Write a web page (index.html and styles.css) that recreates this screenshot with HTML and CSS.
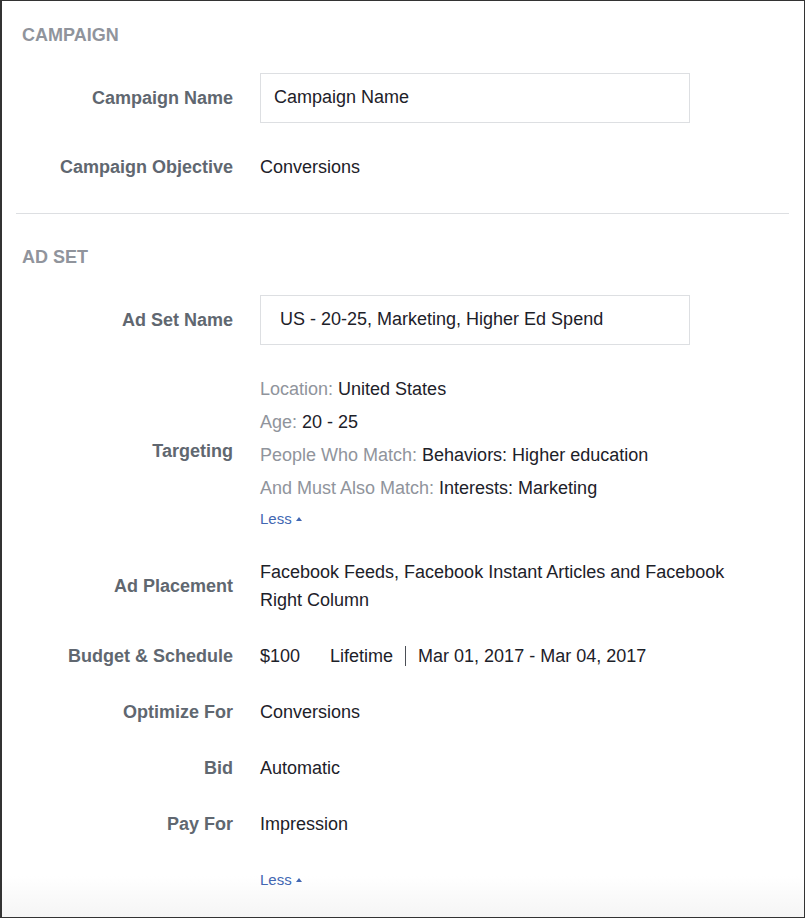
FILE: index.html
```html
<!DOCTYPE html>
<html>
<head>
  <meta charset="UTF-8">
  <title>Campaign Review</title>
  <link rel="stylesheet" href="styles.css">
</head>
<body>
  <div class="frame">
    <!-- Campaign -->
    <div class="section section-first">
      <h2 class="section-title">CAMPAIGN</h2>
      <div class="row row-input">
        <div class="label">Campaign Name</div>
        <div class="value"><div class="field">Campaign Name</div></div>
      </div>
      <div class="row">
        <div class="label">Campaign Objective</div>
        <div class="value">Conversions</div>
      </div>
    </div>

    <!-- Ad set -->
    <div class="section">
      <h2 class="section-title">AD SET</h2>
      <div class="row row-input">
        <div class="label">Ad Set Name</div>
        <div class="value"><div class="field field-wide">US - 20-25, Marketing, Higher Ed Spend</div></div>
      </div>
      <div class="row row-targeting">
        <div class="label">Targeting</div>
        <div class="value">
          <div class="target-line"><span class="muted">Location:</span> United States</div>
          <div class="target-line"><span class="muted">Age:</span> 20 - 25</div>
          <div class="target-line"><span class="muted">People Who Match:</span> Behaviors: Higher education</div>
          <div class="target-line"><span class="muted">And Must Also Match:</span> Interests: Marketing</div>
          <a class="less" href="#">Less<span class="caret"></span></a>
        </div>
      </div>
      <div class="row row-placement">
        <div class="label">Ad Placement</div>
        <div class="value">Facebook Feeds, Facebook Instant Articles and Facebook Right Column</div>
      </div>
      <div class="row">
        <div class="label">Budget &amp; Schedule</div>
        <div class="value budget">
          <span class="amount">$100</span>
          <span class="period">Lifetime</span>
          <span class="dates">Mar 01, 2017 - Mar 04, 2017</span>
        </div>
      </div>
      <div class="row">
        <div class="label">Optimize For</div>
        <div class="value">Conversions</div>
      </div>
      <div class="row">
        <div class="label">Bid</div>
        <div class="value">Automatic</div>
      </div>
      <div class="row">
        <div class="label">Pay For</div>
        <div class="value">Impression</div>
      </div>
      <div class="footer-row">
        <a class="less" href="#">Less<span class="caret"></span></a>
      </div>
    </div>
  </div>
</body>
</html>
```

FILE: styles.css
```css
html, body {
  margin: 0;
  padding: 0;
}
body {
  font-family: "Liberation Sans", Arial, Helvetica, sans-serif;
  font-size: 18px;
  line-height: 22px;
  color: #1d2129;
  background: #fff;
}
.frame {
  box-sizing: border-box;
  width: 805px;
  height: 918px;
  border: 1px solid #333;
  border-left-width: 2px;
  padding: 0 15px 0 14px;
  background: linear-gradient(to bottom, #fff 0, #fff 875px, #f5f5f5 100%);
}
.section-first {
  padding-top: 23px;
  padding-bottom: 18px;
  border-bottom: 1px solid #dddfe2;
}
.section-first + .section {
  padding-top: 32px;
}
.section-title {
  margin: 0 0 11px 6px;
  font-size: 18px;
  line-height: 22px;
  font-weight: bold;
  color: #90949c;
}
.row {
  display: grid;
  grid-template-columns: 217px 480px;
  column-gap: 27px;
  align-items: center;
  padding: 17px 0;
}
.row-input {
  padding: 16px 0;
}
.label {
  text-align: right;
  font-weight: bold;
  color: #606770;
}
.field {
  box-sizing: border-box;
  width: 430px;
  height: 50px;
  border: 1px solid #dddfe2;
  padding: 12px 13px 14px;
  color: #1d2129;
}
.field-wide {
  padding-left: 19px;
}
.row-targeting {
  padding: 12px 0 15px;
}
.target-line {
  line-height: 33px;
}
.muted {
  color: #90949c;
}
.less {
  display: inline-block;
  font-size: 15px;
  line-height: 20px;
  color: #4267b2;
  text-decoration: none;
}
.row-targeting .less {
  margin-top: 4px;
}
.caret {
  display: inline-block;
  width: 0;
  height: 0;
  margin-left: 4px;
  vertical-align: 3px;
  border-left: 3px solid transparent;
  border-right: 3px solid transparent;
  border-bottom: 4px solid #4267b2;
}
.row-placement {
  padding: 14px 0;
  line-height: 28px;
}
.budget {
  display: flex;
  align-items: center;
}
.period {
  margin-left: 30px;
  padding-right: 12px;
}
.dates {
  border-left: 1px solid #4b4f56;
  padding-left: 12px;
  line-height: 20px;
}
.footer-row {
  padding: 16px 0 0 244px;
}
```
